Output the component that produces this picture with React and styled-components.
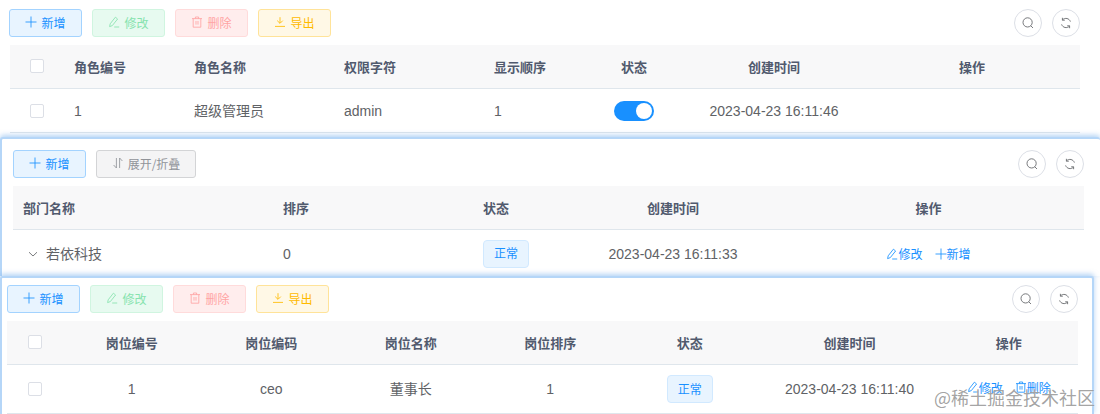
import React from "react";
import styled, { createGlobalStyle } from "styled-components";

const Global = createGlobalStyle`
  html, body { margin: 0; padding: 0; background: #fff; }
  body { font-family: "Liberation Sans", "Noto Sans CJK SC", sans-serif; }
`;

const Page = styled.div`
  position: relative;
  width: 1100px;
  height: 414px;
  overflow: hidden;
  background: #fff;
`;

const Panel = styled.section`
  position: relative;
  box-sizing: border-box;
  width: ${(p) => p.$width}px;
  height: ${(p) => p.$height}px;
  padding: ${(p) => p.$padding};
  overflow: hidden;
  background: #fff;
  ${(p) =>
    p.$framed &&
    `
    border: 2px solid #b5d6f8;
    border-bottom: 0;
    border-right: ${p.$noRight ? "0" : "2px solid #b5d6f8"};
    border-radius: 3px 3px 0 0;
    box-shadow: 0 -2px 5px rgba(110, 170, 235, 0.5);
  `}
`;

const Toolbar = styled.div`
  display: flex;
  justify-content: space-between;
  height: 28px;
  margin-bottom: 8px;
  margin-left: ${(p) => p.$nudge || 0}px;
`;

const ButtonGroup = styled.div`
  display: flex;
  gap: 10px;
`;

const ToolButton = styled.button`
  box-sizing: border-box;
  display: inline-flex;
  align-items: center;
  justify-content: center;
  gap: 4px;
  width: ${(p) => p.$width || 73}px;
  height: 28px;
  padding: 0 0 2px;
  font: 12px "Noto Sans CJK SC", "Liberation Sans", sans-serif;
  color: ${(p) => p.$fg};
  background: ${(p) => p.$bg};
  border: 1px solid ${(p) => p.$line};
  border-radius: 3px;
`;

const CircleButton = styled.button`
  box-sizing: border-box;
  display: inline-flex;
  align-items: center;
  justify-content: center;
  width: 28px;
  height: 28px;
  padding: 0;
  color: #606266;
  background: #fff;
  border: 1px solid #dcdfe6;
  border-radius: 50%;
`;

const HeadRow = styled.div`
  display: grid;
  grid-template-columns: ${(p) => p.$cols};
  height: 44px;
  box-sizing: border-box;
  padding-bottom: 1px;
  background: #f8f8f9;
  border-bottom: 1px solid #dfe6ec;
  align-items: center;
  color: #515a6e;
  font-size: 13px;
  font-weight: 700;
  font-family: "Noto Sans CJK SC", "Liberation Sans", sans-serif;
`;

const BodyRow = styled.div`
  display: grid;
  grid-template-columns: ${(p) => p.$cols};
  height: ${(p) => p.$height}px;
  box-sizing: border-box;
  border-bottom: 1px solid #dfe6ec;
  align-items: center;
  color: #606266;
  font-size: 14px;
`;

const Cell = styled.div`
  display: flex;
  align-items: center;
  justify-content: ${(p) => (p.$center ? "center" : "flex-start")};
  padding: 0 10px;
  min-width: 0;
  white-space: nowrap;
`;

const CjkText = styled.span`
  font-family: "Noto Sans CJK SC", sans-serif;
  font-size: 14px;
  margin-top: -2px;
`;

const Check = styled.span`
  box-sizing: border-box;
  display: block;
  width: 14px;
  height: 14px;
  background: #fff;
  border: 1px solid #dcdfe6;
  border-radius: 2px;
`;

const Switch = styled.span`
  position: relative;
  display: block;
  width: 40px;
  height: 20px;
  border-radius: 10px;
  background: #1890ff;
  &::after {
    content: "";
    position: absolute;
    top: 2px;
    right: 2px;
    width: 16px;
    height: 16px;
    border-radius: 50%;
    background: #fff;
  }
`;

const Tag = styled.span`
  box-sizing: border-box;
  display: inline-flex;
  align-items: center;
  justify-content: center;
  width: 46px;
  height: 28px;
  padding-bottom: 2px;
  font: 12px "Noto Sans CJK SC", sans-serif;
  color: #1890ff;
  background: #e8f4ff;
  border: 1px solid #d1e9ff;
  border-radius: 4px;
`;

const Actions = styled.div`
  display: flex;
  gap: 12px;
  margin-top: ${(p) => p.$lift || 0}px;
`;

const ActionLink = styled.span`
  display: inline-flex;
  align-items: center;
  color: #1890ff;
  font: 12px "Noto Sans CJK SC", sans-serif;
`;

const TreeName = styled.span`
  display: inline-flex;
  align-items: center;
  gap: 7px;
  padding-left: 4px;
  color: #606266;
`;

const Watermark = styled.div`
  position: absolute;
  left: 934px;
  top: 384px;
  font: 18px/26px "Noto Sans CJK SC", sans-serif;
  color: rgba(105, 105, 105, 0.62);
  white-space: nowrap;
  text-shadow: 0 0 1px #fff;
`;

const Svg = ({ children, size = 12 }) => (
  <svg width={size} height={size} viewBox="0 0 12 12" fill="none" stroke="currentColor" strokeWidth="0.85">
    {children}
  </svg>
);

const Plus = () => (
  <Svg>
    <path d="M6 .5V11.5M.5 6H11.5" />
  </Svg>
);
const Edit = () => (
  <Svg>
    <path d="M1.6 10.6L2.2 7.8L7.4 1.2L9.6 3L4.3 9.6L1.6 10.6Z" />
    <path d="M6.2 11H11.2" />
  </Svg>
);
const Trash = () => (
  <Svg>
    <path d="M1 2.6H11M4.4 2.6V1H7.6V2.6M2.2 2.6V11.2H9.8V2.6M5 5V8.6M7 5V8.6" />
  </Svg>
);
const Download = () => (
  <Svg>
    <path d="M6 1.2V7M3.2 4.6L6 7.4L8.8 4.6M1 10.4H11" />
  </Svg>
);
const Sort = () => (
  <Svg>
    <path d="M4.4 1V11L1.6 8M7.6 11V1L10.4 4" />
  </Svg>
);
const Chevron = () => (
  <Svg>
    <path d="M2 4.2L6 8L10 4.2" />
  </Svg>
);
const Search = () => (
  <Svg>
    <circle cx="5.6" cy="5.4" r="4.6" />
    <path d="M8.8 8.8L11 11" />
  </Svg>
);
const Refresh = () => (
  <Svg>
    <path d="M10.4 4.6A4.7 4.7 0 0 0 2.6 2.8M2.4 .8V3.2H4.8M1.6 7.4A4.7 4.7 0 0 0 9.4 9.2M9.6 11.2V8.8H7.2" />
  </Svg>
);

const tones = {
  primary: { $fg: "#1890ff", $bg: "#e8f4ff", $line: "#a3d3ff" },
  success: { $fg: "#86e3ae", $bg: "#e7faf0", $line: "#d0f5e0" },
  danger: { $fg: "#ffa4a4", $bg: "#ffeded", $line: "#ffdbdb" },
  warning: { $fg: "#ffba00", $bg: "#fff8e6", $line: "#ffe399" },
  info: { $fg: "#909399", $bg: "#f4f4f5", $line: "#d3d4d6" },
};

const Tool = ({ tone, icon, label, width }) => (
  <ToolButton {...tones[tone]} $width={width}>
    {icon}
    {label}
  </ToolButton>
);

const RightTools = () => (
  <ButtonGroup>
    <CircleButton aria-label="search">
      <Search />
    </CircleButton>
    <CircleButton aria-label="refresh">
      <Refresh />
    </CircleButton>
  </ButtonGroup>
);

const CrudTools = () => (
  <ButtonGroup>
    <Tool tone="primary" icon={<Plus />} label="新增" />
    <Tool tone="success" icon={<Edit />} label="修改" />
    <Tool tone="danger" icon={<Trash />} label="删除" />
    <Tool tone="warning" icon={<Download />} label="导出" />
  </ButtonGroup>
);

const roleCols = "54px 120px 150px 150px 100px 100px 180px 1fr";
const deptCols = "260px 200px 100px 200px 1fr";
const postCols = "55px 139.5px 139.5px 139.5px 139.5px 139.5px 180px 1fr";

export default function App() {
  return (
    <Page>
      <Global />
      <Panel $width={1100} $height={137} $padding="9px 20px 0 10px">
        <Toolbar $nudge={-1}>
          <CrudTools />
          <RightTools />
        </Toolbar>
        <HeadRow $cols={roleCols}>
          <Cell $center><Check /></Cell>
          <Cell>角色编号</Cell>
          <Cell>角色名称</Cell>
          <Cell>权限字符</Cell>
          <Cell>显示顺序</Cell>
          <Cell $center>状态</Cell>
          <Cell $center>创建时间</Cell>
          <Cell $center>操作</Cell>
        </HeadRow>
        <BodyRow $cols={roleCols} $height={44}>
          <Cell $center><Check /></Cell>
          <Cell>1</Cell>
          <Cell><CjkText>超级管理员</CjkText></Cell>
          <Cell>admin</Cell>
          <Cell>1</Cell>
          <Cell $center><Switch /></Cell>
          <Cell $center>2023-04-23 16:11:46</Cell>
          <Cell />
        </BodyRow>
      </Panel>

      <Panel $framed $noRight $width={1100} $height={139} $padding="11px 16px 0 11px">
        <Toolbar>
          <ButtonGroup>
            <Tool tone="primary" icon={<Plus />} label="新增" />
            <Tool tone="info" icon={<Sort />} label="展开/折叠" width={100} />
          </ButtonGroup>
          <RightTools />
        </Toolbar>
        <HeadRow $cols={deptCols}>
          <Cell>部门名称</Cell>
          <Cell>排序</Cell>
          <Cell>状态</Cell>
          <Cell $center>创建时间</Cell>
          <Cell $center>操作</Cell>
        </HeadRow>
        <BodyRow $cols={deptCols} $height={48}>
          <Cell>
            <TreeName>
              <Chevron />
              <CjkText>若依科技</CjkText>
            </TreeName>
          </Cell>
          <Cell>0</Cell>
          <Cell><Tag>正常</Tag></Cell>
          <Cell $center>2023-04-23 16:11:33</Cell>
          <Cell $center>
            <Actions>
              <ActionLink><Edit />修改</ActionLink>
              <ActionLink><Plus />新增</ActionLink>
            </Actions>
          </Cell>
        </BodyRow>
      </Panel>

      <Panel $framed $width={1094} $height={139} $padding="7px 14px 0 5px">
        <Toolbar>
          <CrudTools />
          <RightTools />
        </Toolbar>
        <HeadRow $cols={postCols}>
          <Cell $center><Check /></Cell>
          <Cell $center>岗位编号</Cell>
          <Cell $center>岗位编码</Cell>
          <Cell $center>岗位名称</Cell>
          <Cell $center>岗位排序</Cell>
          <Cell $center>状态</Cell>
          <Cell $center>创建时间</Cell>
          <Cell $center>操作</Cell>
        </HeadRow>
        <BodyRow $cols={postCols} $height={49}>
          <Cell $center><Check /></Cell>
          <Cell $center>1</Cell>
          <Cell $center>ceo</Cell>
          <Cell $center><CjkText>董事长</CjkText></Cell>
          <Cell $center>1</Cell>
          <Cell $center><Tag>正常</Tag></Cell>
          <Cell $center>2023-04-23 16:11:40</Cell>
          <Cell $center>
            <Actions $lift={-4}>
              <ActionLink><Edit />修改</ActionLink>
              <ActionLink><Trash />删除</ActionLink>
            </Actions>
          </Cell>
        </BodyRow>
      </Panel>
      <Watermark>@稀土掘金技术社区</Watermark>
    </Page>
  );
}
